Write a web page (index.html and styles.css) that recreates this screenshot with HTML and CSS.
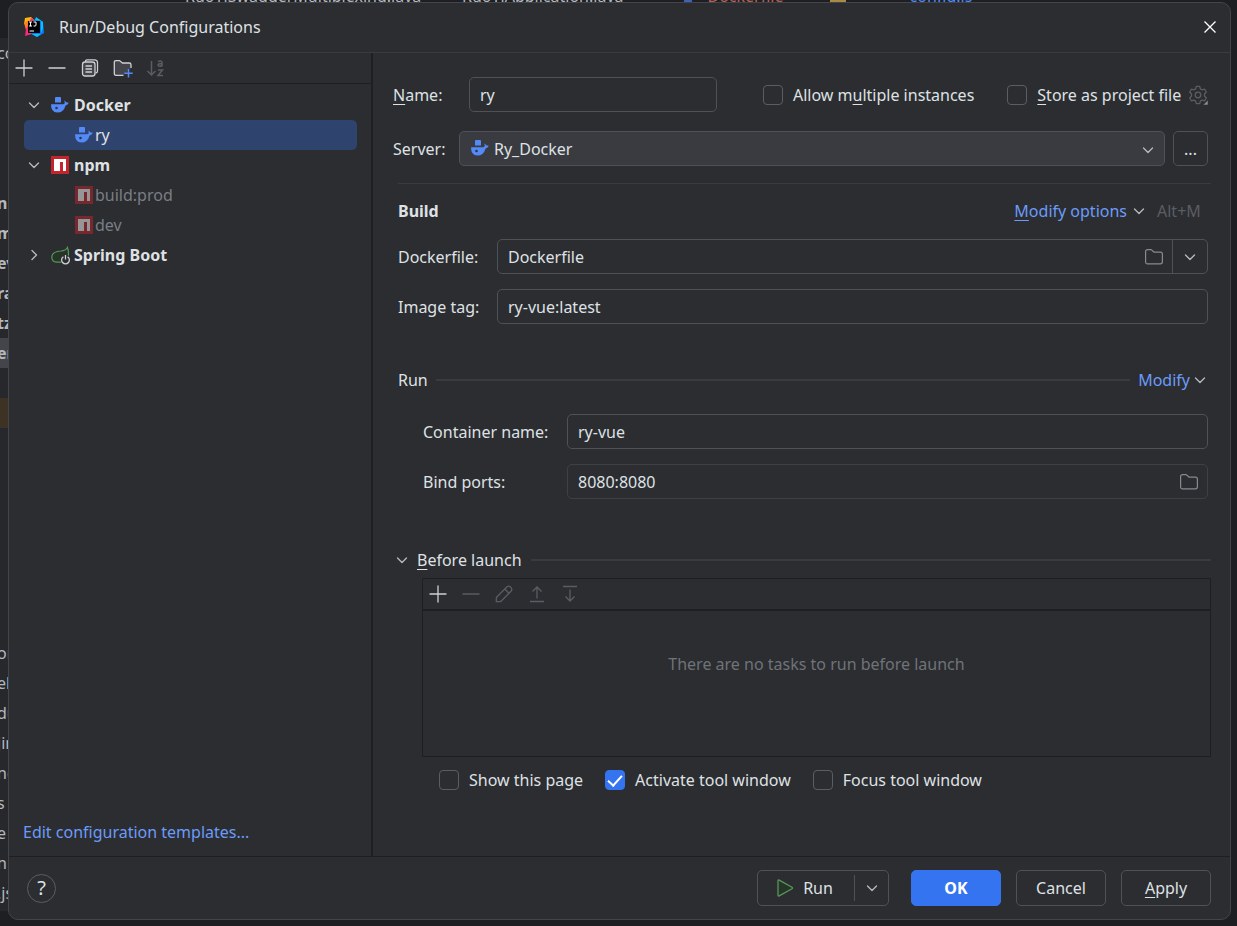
FILE: index.html
```html
<!DOCTYPE html>
<html lang="en">
<head>
<meta charset="utf-8">
<title>Run/Debug Configurations</title>
<link rel="stylesheet" href="styles.css">
</head>
<body>
<svg class="defs" aria-hidden="true">
  <symbol id="docker" viewBox="0 0 18 18"><path fill="#548af7" d="M4 2.200Q4 1 5 1H9Q10 1 10 2V6.500H4Z M0 8.200H12.200Q13.400 7.800 13.800 7L13.300 4.500Q14.500 5 15.200 6.300Q16.700 6.300 17.800 6.800Q17 9 14.600 9.400Q12.600 16.500 6.300 16.500Q0 16.500 0 8.200Z"/><circle cx="5.500" cy="12" r="1.300" fill="#2b3550"/></symbol>
  <symbol id="npm" viewBox="0 0 18 18"><path fill="#c4242b" d="M0 0H18V18H0Z"/><path fill="#fff" d="M3 3H15V15H12V6H9V15H3Z"/></symbol>
  <symbol id="chevron" viewBox="0 0 12 12"><path d="M1.500 4 6 8.500 10.500 4" fill="none" stroke="currentColor" stroke-width="1.400" stroke-linecap="round" stroke-linejoin="round"/></symbol>
  <symbol id="folder" viewBox="0 0 20 20"><path d="M1.600 4.700Q1.600 2.700 3.600 2.700H6.800Q7.500 2.700 8 3.200L10 5.100H16.400Q18.400 5.100 18.400 7.100V14.800Q18.400 16.800 16.400 16.800H3.600Q1.600 16.800 1.600 14.800Z" fill="none" stroke="currentColor" stroke-width="1.200"/></symbol>
  <symbol id="plus" viewBox="0 0 20 20"><path d="M10 2V18M2 10H18" stroke="currentColor" stroke-width="1.300" stroke-linecap="round"/></symbol>
  <symbol id="minus" viewBox="0 0 20 20"><path d="M2 10H18" stroke="currentColor" stroke-width="1.300" stroke-linecap="round"/></symbol>
</svg>

<div class="backdrop" aria-hidden="true">
  <div class="tabs">
    <span class="tab tab-first">RuoYiSwaggerMultiplexing.java</span>
    <span class="tab">RuoYiApplication.java</span>
    <span class="tab tab-mark mark-blue"></span>
    <span class="tab tab-red">Dockerfile</span>
    <span class="tab tab-mark mark-gold"></span>
    <span class="tab tab-blue">config.js</span>
  </div>
  <ul class="project">
    <li>co</li><li></li><li></li><li></li><li></li>
    <li class="b">n</li><li class="b">m</li><li class="b">ev</li><li class="b">ra</li><li class="b">tz</li><li class="b current">en</li>
    <li></li><li class="excluded"></li><li></li><li></li><li></li><li></li><li></li><li></li><li></li>
    <li>or</li><li>el</li><li>du</li><li>jin</li><li>nd</li><li>s</li><li>e</li><li>n</li><li>.js</li>
  </ul>
</div>

<main class="dialog">
  <header class="titlebar">
    <svg class="logo" viewBox="0 0 20 20"><path fill="#fdb60d" d="M1 1 7 0 10 3 4 8 0 7Z"/><path fill="#fc801d" d="M0 6 5 3V12L2 13Z"/><path fill="#fe2879" d="M7 1 10 3 11 16 1 19 2 12 4 8Z"/><path fill="#087cfa" d="M10 3 13 1 19 5 20 16 13 20 7 17Z"/><path fill="#07c3f2" d="M12 0 19 5V11L17 16V4L11 3Z"/><path fill="#07c3f2" d="M8 17H17L13 20Z"/><path d="M4 4H16V16H4Z"/><path d="M5 5H8M6.500 5V9M5 9H8M9.500 5H12V8Q12 9 11 9H9.500M5.500 14H10" fill="none" stroke="#fff"/></svg>
    <h1>Run/Debug Configurations</h1>
    <button class="plain close" aria-label="Close"><svg viewBox="0 0 14 14"><path d="M1.500 1.500 12.500 12.500M12.500 1.500 1.500 12.500" stroke="currentColor" stroke-width="1.300"/></svg></button>
  </header>

  <div class="content">
    <aside class="sidebar">
      <div class="toolbar">
        <button class="plain" aria-label="Add"><svg class="i20"><use href="#plus"/></svg></button>
        <button class="plain" aria-label="Remove"><svg class="i20"><use href="#minus"/></svg></button>
        <button class="plain" aria-label="Copy"><svg class="i20" viewBox="0 0 20 20" fill="none" stroke="currentColor" stroke-width="1.300"><path d="M5.500 4V3.500Q5.500 1.800 7.200 1.800H14.500Q17.500 1.800 17.500 4.800V13Q17.500 15 15.500 15.200"/><rect x="2.500" y="4" width="12.500" height="14" rx="2.500" fill="#43454a"/><path d="M5.500 8H12M5.500 11H12M5.500 14H12"/></svg></button>
        <button class="plain" aria-label="New folder"><svg class="i20" viewBox="0 0 20 20"><path d="M10.500 17.300H3Q1.300 17.300 1.300 15.500V4.300Q1.300 2.600 3 2.600H6.500L9.500 5H16.200Q18 5 18 6.800V10" fill="#43454a" stroke="currentColor" stroke-width="1.300"/><path d="M15.500 11V19.500M11.300 15.200H19.700" stroke="#548af7" stroke-width="1.500"/></svg></button>
        <button class="plain dim" aria-label="Sort" disabled><svg class="i20" viewBox="0 0 20 20" fill="none" stroke="currentColor" stroke-width="1.500"><path d="M5.500 3V17M1.500 13 5.500 17 9.500 13"/><path d="M12 3.500Q15.500 2 16 4.500V8.500M16 5.500Q12 5.500 12 7.200Q13 9.300 16 7.500M12 12H16.500L12 17.500H17"/></svg></button>
      </div>
      <ul class="tree" role="tree">
        <li role="treeitem" class="group"><svg class="i12"><use href="#chevron"/></svg><svg class="i18"><use href="#docker"/></svg><span>Docker</span></li>
        <li role="treeitem" class="leaf selected" aria-selected="true"><svg class="i18"><use href="#docker"/></svg><span>ry</span></li>
        <li role="treeitem" class="group"><svg class="i12"><use href="#chevron"/></svg><svg class="i18"><use href="#npm"/></svg><span>npm</span></li>
        <li role="treeitem" class="leaf faded"><svg class="i18"><use href="#npm"/></svg><span>build:prod</span></li>
        <li role="treeitem" class="leaf faded"><svg class="i18"><use href="#npm"/></svg><span>dev</span></li>
        <li role="treeitem" class="group"><svg class="i12 right"><use href="#chevron"/></svg><svg class="i18" viewBox="0 0 18 18"><path d="M16.500 1.500Q15 4.500 10 5Q1 5.500 .8 11Q.8 16 5.500 16.200H10Q17.500 14 17.500 8Q17.500 5 16.500 1.500Z" fill="#253627" stroke="#57965c" stroke-width="1.200"/><circle cx="14.500" cy="13.800" r="5" fill="#2b2d30"/><path d="M12.400 10.700A3.900 3.900 0 1 0 16.600 10.700M14.500 9V13.500" fill="none" stroke="#ced0d6" stroke-width="1.300"/></svg><span>Spring Boot</span></li>
      </ul>
      <a class="link templates" href="#templates">Edit configuration templates...</a>
    </aside>

    <form class="form">
      <div class="row name-row">
        <label for="name"><u>N</u>ame:</label>
        <input class="field" id="name" type="text" value="ry">
        <span class="check multi"><input type="checkbox" id="multi"><label for="multi">Allow m<u>u</u>ltiple instances</label></span>
        <span class="check"><input type="checkbox" id="store"><label for="store"><u>S</u>tore as project file</label></span>
        <button type="button" class="plain gear" aria-label="Storage settings"><svg class="i20" viewBox="0 0 20 20" fill="none" stroke="currentColor" stroke-width="1.300"><path d="M8.300 1.300H11.700L12.400 3.900L14.100 4.900L16.700 4.200L18.300 7L16.500 9V11L18.300 13L16.700 15.800L14.100 15.100L12.400 16.100L11.700 18.700H8.300L7.600 16.100L5.900 15.100L3.300 15.800L1.700 13L3.500 11V9L1.700 7L3.300 4.200L5.900 4.900L7.600 3.900Z" stroke-linejoin="round"/><circle cx="10" cy="10" r="2.800"/><path d="M20 15V20H15Z" fill="#868a91" stroke="#2b2d30" stroke-width=".5"/></svg></button>
      </div>
      <div class="row server-row">
        <label for="server">Server:</label>
        <span class="combo"><svg class="i18 combo-icon"><use href="#docker"/></svg><select class="field" id="server"><option>Ry_Docker</option></select><svg class="i12 combo-arrow"><use href="#chevron"/></svg></span>
        <button type="button" class="btn more" aria-label="More">...</button>
      </div>

      <section class="build">
        <div class="row build-head"><h2>Build</h2><a class="link" href="#options"><u>M</u>odify options</a><svg class="i12"><use href="#chevron"/></svg><span class="hint">Alt+M</span></div>
        <div class="row pair"><label for="dockerfile">Dockerfile:</label>
          <span class="field group-field"><input id="dockerfile" type="text" value="Dockerfile"><button type="button" class="plain browse" aria-label="Browse"><svg class="i20"><use href="#folder"/></svg></button><button type="button" class="plain drop" aria-label="Show list"><svg class="i12"><use href="#chevron"/></svg></button></span></div>
        <div class="row pair"><label for="tag">Image tag:</label><input class="field" id="tag" type="text" value="ry-vue:latest"></div>
      </section>

      <section class="run">
        <div class="row run-head"><h3>Run</h3><hr><a class="link" href="#modify">Modify</a><svg class="i12"><use href="#chevron"/></svg></div>
        <div class="row pair"><label for="container">Container name:</label><input class="field" id="container" type="text" value="ry-vue"></div>
        <div class="row pair"><label for="ports">Bind ports:</label>
          <span class="field group-field quiet"><input id="ports" type="text" value="8080:8080"><button type="button" class="plain browse" aria-label="Edit ports"><svg class="i20"><use href="#folder"/></svg></button></span></div>
      </section>

      <section class="before">
        <div class="row before-head"><svg class="i12"><use href="#chevron"/></svg><h3><u>B</u>efore launch</h3><hr></div>
        <div class="tasks">
          <div class="toolbar">
            <button type="button" class="plain" aria-label="Add task"><svg class="i20"><use href="#plus"/></svg></button>
            <button type="button" class="plain dim" aria-label="Remove task" disabled><svg class="i20"><use href="#minus"/></svg></button>
            <button type="button" class="plain dim" aria-label="Edit task" disabled><svg class="i20" viewBox="0 0 20 20" fill="none" stroke="currentColor" stroke-width="1.300"><path d="M2.300 17.700V14.500Q2.300 13.400 3 12.700L13 2.800Q14.500 1.600 16.200 2.800L17.200 3.800Q18.400 5.500 17.200 7L7.300 17Q6.600 17.700 5.500 17.700ZM10.800 5 15 9.200"/></svg></button>
            <button type="button" class="plain dim" aria-label="Move up" disabled><svg class="i20" viewBox="0 0 20 20" fill="none" stroke="currentColor" stroke-width="1.300"><path d="M10 14.500V3M5.500 7.500 10 3 14.500 7.500M3 17.500H17"/></svg></button>
            <button type="button" class="plain dim" aria-label="Move down" disabled><svg class="i20" viewBox="0 0 20 20" fill="none" stroke="currentColor" stroke-width="1.300"><path d="M10 5.500V17M5.500 12.500 10 17 14.500 12.500M3 2.500H17"/></svg></button>
          </div>
          <p>There are no tasks to run before launch</p>
        </div>
        <div class="row flags">
          <span class="check"><input type="checkbox" id="show"><label for="show">Show this page</label></span>
          <span class="check"><input type="checkbox" id="activate" checked><label for="activate">Activate tool window</label></span>
          <span class="check"><input type="checkbox" id="focus"><label for="focus">Focus tool window</label></span>
        </div>
      </section>
    </form>
  </div>

  <footer class="footer">
    <button class="help" aria-label="Help">?</button>
    <div class="split"><button class="plain split-main"><svg class="i20" viewBox="0 0 20 20"><path d="M3 2.800Q3 1.500 4.200 2.100L17 9.200Q18 10 17 10.800L4.200 17.900Q3 18.500 3 17.200Z" fill="#253627" stroke="#57965c" stroke-width="1.300"/></svg>Run</button><button class="plain split-drop" aria-label="Run options"><svg class="i12"><use href="#chevron"/></svg></button></div>
    <button class="btn primary">OK</button>
    <button class="btn">Cancel</button>
    <button class="btn"><u>A</u>pply</button>
  </footer>
</main>
</body>
</html>
```
FILE: styles.css
```css
* { box-sizing: border-box; }
body {
  margin: 0;
  min-height: 100vh;
  padding: 2px 6px 6px 8px;
  display: flex;
  background: #1e1f22;
  color: #dfe1e5;
  font: 16px/22px "Noto Sans", "Open Sans", sans-serif;
}
h1, h2, h3, p, ul { margin: 0; padding: 0; font-size: 16px; font-weight: 400; }
ul { list-style: none; }
input, select, button { font: inherit; color: inherit; margin: 0; }
u { text-underline-offset: 3px; text-decoration-thickness: 1px; }
svg { display: block; flex: none; }
.defs { position: absolute; width: 0; height: 0; }
.i12 { width: 12px; height: 12px; color: #b4b8bf; }
.i18 { width: 18px; height: 18px; overflow: visible; }
.i20 { width: 20px; height: 20px; }
.right { transform: rotate(-90deg); }

/* editor window behind the dialog */
.backdrop { position: absolute; inset: 0; overflow: hidden; color: #b4b8bf; }
.tabs { display: flex; gap: 24px; height: 3px; padding-left: 185px; white-space: nowrap; }
.tab { margin-top: -15px; }
.tab-first { width: 253px; }
.tab-mark { width: 16px; height: 18px; }
.mark-blue { background: #3f62b5; width: 8px; margin-left: 36px; }
.mark-gold { background: #a88b46; margin-left: 22px; }
.tab-red { color: #b5645c; margin-left: -8px; }
.tab-blue { color: #548af7; margin-left: 40px; }
.project { width: 10px; height: 874px; margin-top: 35px; border-bottom: 1px solid #1e1f22; background: #26282b; }
.project li { height: 30px; line-height: 30px; white-space: nowrap; text-indent: -3px; }
.b { font-weight: 700; }
.project .current { background: #43454a; }
.project .excluded { background: #3d3223; }

.dialog {
  position: relative;
  flex: 1;
  min-width: 0;
  display: flex;
  flex-direction: column;
  background: #2b2d30;
  border: 1px solid #43454a;
  border-radius: 10px;
}
.titlebar { display: flex; align-items: center; gap: 15px; height: 50px; padding: 0 13px 2px 15px; border-bottom: 1px solid #393b40; }
.logo { width: 20px; height: 20px; }
.titlebar h1 { flex: 1; }
.plain { display: flex; align-items: center; justify-content: center; padding: 0; border: 0; background: none; color: #ced0d6; }
.dim { color: #5a5d63; }
.close svg { width: 14px; height: 14px; color: #fff; }
.content { flex: 1; display: flex; }

.sidebar { display: flex; flex-direction: column; width: 30%; max-width: 364px; border-right: 2px solid #1e1f22; }
.toolbar { display: flex; align-items: center; gap: 13px; }
.sidebar .toolbar { height: 31px; padding: 0 0 1px 5px; border-bottom: 1px solid #1e1f22; }
.tree { flex: 1; padding: 6px 14px 6px 15px; }
.tree li { display: flex; align-items: center; height: 30px; border-radius: 5px; }
.group { gap: 11px; padding-left: 4px; font-weight: 700; }
.group span { margin-left: -6px; }
.leaf { gap: 2px; padding-left: 51px; }
.selected { background: #2e436e; }
.faded { color: #7a7e85; }
.faded svg { opacity: .5; }
.link { color: #6b9bfa; text-decoration: none; }
.templates { padding: 0 14px 13px; }

.form { flex: 1; min-width: 0; padding: 24px 19px 0 20px; }
.row { display: flex; align-items: center; }
.field {
  height: 35px;
  min-width: 0;
  padding: 0 10px;
  border: 1px solid #4e5157;
  border-radius: 5px;
  background: #2b2d30;
  outline: 0;
}
.name-row label[for="name"] { width: 76px; }
#name { width: 248px; }
.name-row { padding-right: 3px; }
.check { display: flex; align-items: center; gap: 10px; white-space: nowrap; }
.multi { margin: 0 33px 0 46px; }
.check input {
  appearance: none;
  display: flex;
  align-items: center;
  justify-content: center;
  width: 20px;
  height: 20px;
  border: 1px solid #5a5d63;
  border-radius: 4px;
}
.check input:checked { background: #3574f0; border-color: #3574f0; }
.check input:checked::after {
  content: "";
  width: 6px;
  height: 12px;
  margin-bottom: 3px;
  border: solid #fff;
  border-width: 0 2px 2px 0;
  transform: rotate(42deg);
}
.gear { margin-left: auto; color: #5a5d63; }
.server-row { margin-top: 19px; padding-right: 3px; }
.server-row label { width: 66px; }
.combo { position: relative; flex: 1; }
.combo select { display: block; appearance: none; width: 100%; padding-left: 34px; background: #393b40; }
.combo-icon { position: absolute; left: 12px; top: 8px; }
.combo-arrow { position: absolute; right: 11px; top: 13px; }
.btn { height: 36px; min-width: 90px; padding: 0 12px; border: 1px solid #4e5157; border-radius: 5px; background: #2b2d30; }
.more { min-width: 35px; height: 35px; padding: 0; margin-left: 8px; }

.build { margin: 17px 0 0 5px; border-top: 1px solid #393b40; }
.build-head { margin: 16px 5px 17px 0; }
.build-head h2 { flex: 1; font-weight: 700; }
.build-head svg { margin: 0 12px 0 6px; }
.hint { min-width: 49px; color: #5a5d63; }
.pair { padding-right: 3px; }
.pair + .pair { margin-top: 15px; }
.pair > .field { flex: 1; }
.build .pair label { width: 99px; }
.group-field { display: flex; padding-right: 0; }
.group-field input { flex: 1; min-width: 0; padding: 0; border: 0; background: none; outline: 0; }
.quiet { border-color: #3e4044; }
.browse { width: 36px; color: #868a91; }
.drop { width: 35px; border-left: 1px solid #4e5157; }

.run { margin: 45px 0 0 5px; }
.run-head { margin-bottom: 23px; padding-right: 5px; }
hr { flex: 1; height: 2px; margin: 0 8px; border: 0; background: #393b40; }
.run-head svg { margin-left: 4px; }
.run .pair { padding-left: 25px; }
.run .pair label { width: 144px; }

.before { margin: 50px 0 0 3px; }
.before-head { gap: 9px; }
.before-head hr { margin: 0; }
.tasks { min-height: 179px; margin: 7px 0 0 26px; border: 1px solid #1e1f22; }
.tasks .toolbar { height: 32px; padding-left: 5px; border-bottom: 2px solid #1e1f22; }
.tasks p { padding-top: 42px; text-align: center; color: #6f737a; }
.flags { flex-wrap: wrap; gap: 22px; margin: 12px 0 12px 43px; }

.footer { display: flex; align-items: center; gap: 15px; padding: 13px 19px 13px 18px; border-top: 1px solid #1e1f22; }
.help { width: 29px; height: 29px; margin-right: auto; padding: 0; border: 1px solid #5a5d63; border-radius: 50%; background: none; font-size: 20px; line-height: 26px; }
.split { display: flex; align-items: center; height: 36px; margin-right: 7px; border: 1px solid #4e5157; border-radius: 5px; }
.split-main { gap: 8px; width: 96px; padding-right: 4px; color: #dfe1e5; }
.split-drop { width: 34px; height: 26px; border-left: 1px solid #4e5157; }
.primary { border-color: #3574f0; background: #3574f0; color: #fff; font-weight: 700; }
```
